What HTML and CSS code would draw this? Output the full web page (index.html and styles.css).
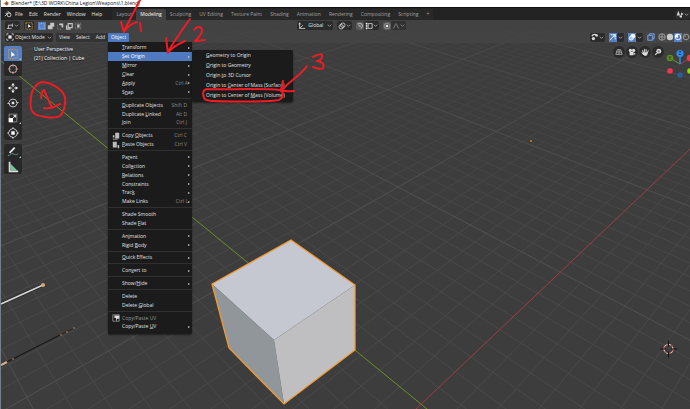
FILE: index.html
```html
<!DOCTYPE html>
<html lang="en">
<head>
<meta charset="utf-8">
<title>Blender</title>
<link rel="stylesheet" href="styles.css">
</head>
<body>
<div class="app">
  <svg class="scene" aria-hidden="true">
    <defs>
      <linearGradient id="minor" gradientUnits="userSpaceOnUse" x1="0" y1="30" x2="0" y2="260">
        <stop offset="0" stop-color="#484848" stop-opacity=".25"/>
        <stop offset="1" stop-color="#484848"/>
      </linearGradient>
      <linearGradient id="major" gradientUnits="userSpaceOnUse" x1="0" y1="30" x2="0" y2="200">
        <stop offset="0" stop-color="#505050" stop-opacity=".5"/>
        <stop offset="1" stop-color="#505050"/>
      </linearGradient>
    </defs>
    <path id="grid-minor" stroke="url(#minor)"/>
    <path id="grid-major" stroke="url(#major)"/>
    <path d="M1 61L427 409" stroke="#6b8f23"/>
    <path d="M690 149L416 409" stroke="#a03c4a"/>
    <path d="M1 304L43 285" stroke="#1c1c1c" stroke-width="3"/>
    <path d="M1 304L43 285" stroke="#d8d8d8" stroke-width="1.600"/>
    <circle cx="43" cy="285" r="2" fill="#d9a878"/>
    <path d="M1 365L62 334" stroke="#1c1a1a" stroke-width="1.400"/>
    <path d="M62 334L74 328" stroke="#2a2422"/>
    <path d="M1 365L7 362" stroke="#d9b08c" stroke-width="2"/>
    <path d="M12 359h2M60 335h2M66 332h2M73 328h2" stroke="#b98a64"/>
    <path d="M212 284L291 240L355 285L274 340Z" fill="#c5c8d0"/>
    <path d="M212 284L274 340L284 404L229 348Z" fill="#90969a"/>
    <path d="M274 340L355 285V350L284 404Z" fill="#bfbfc1"/>
    <path d="M212 284L291 240L355 285V350L284 404L229 348Z" stroke="#f29a34" stroke-width="1.3" fill="none"/>
    <circle cx="531" cy="141" r="1.3" fill="#f0a030" stroke="#222" stroke-width=".6"/>
    <g fill="none">
      <circle cx="668.500" cy="349" r="4.500" stroke="#ddd" stroke-width="1.2"/>
      <circle cx="668.500" cy="349" r="4.500" stroke="#c23b3b" stroke-width="1.2" stroke-dasharray="2.300 2.300"/>
      <path d="M660 349h6M671 349h6M668.500 340.500v6M668.500 351.500v6" stroke="#111"/>
    </g>
  </svg>

  <header class="title">
    <svg class="mark" viewBox="0 0 10 10"><path d="M1 7L6 2L9 5" stroke="#e87d0d" stroke-width="1.500" fill="none"/><circle cx="6" cy="6" r="2.500" stroke="#e87d0d" stroke-width="1.500" fill="#265787"/></svg>
    <span>Blender* [E:\3D WORK\China Legion\Weapons\1.blend]</span>
  </header>

  <div class="topbar">
    <svg class="mark" viewBox="0 0 10 10" stroke="#ddd" fill="none"><path d="M1 7.500L5.500 4H2M4.500 1.500L8.500 5"/><circle cx="6.300" cy="6" r="2.500"/></svg>
    <nav class="menus">
      <button>File</button><button>Edit</button><button>Render</button><button>Window</button><button>Help</button>
    </nav>
    <nav class="tabs">
      <button>Layout</button><button class="active">Modeling</button><button>Sculpting</button><button>UV Editing</button><button>Texture Paint</button><button>Shading</button><button>Animation</button><button>Rendering</button><button>Compositing</button><button>Scripting</button><button>+</button>
    </nav>
    <button class="chip end" aria-label="Scene"><svg viewBox="0 0 10 10" fill="#ddd"><path d="M3 1l2 6H1zM7 3l2 2-2 2-1-2z"/><circle cx="6" cy="8" r="1.500"/></svg><svg class="chev" viewBox="0 0 6 6"><path d="M1 2l2 2 2-2"/></svg></button>
  </div>

  <div class="toolrow">
    <div class="left">
      <button class="chip" aria-label="Tool settings"><svg viewBox="0 0 10 10" stroke="#ddd" fill="none"><path d="M1 8h6M3 8V4h5M8 2v4"/></svg><svg class="chev" viewBox="0 0 6 6"><path d="M1 2l2 2 2-2"/></svg></button>
      <button class="chip pick" aria-label="Select box"><svg viewBox="0 0 10 10"><rect x="1" y="1" width="8" height="8" fill="none" stroke="#e29a33" stroke-dasharray="2 1"/><path d="M4 2.500v5l1.300-1.200L7.500 6z" fill="#fff"/></svg></button>
      <div class="modes">
        <button class="on" aria-label="Set"><svg viewBox="0 0 10 10"><rect x="2" y="2" width="6" height="6" fill="#5680c2" stroke="#9fc0f0" stroke-dasharray="1 1"/></svg></button>
        <button aria-label="Extend"><svg viewBox="0 0 10 10" fill="#ddd"><path d="M4 1h5v5H7v3H1V4h3z"/></svg></button>
        <button aria-label="Subtract"><svg viewBox="0 0 10 10"><path d="M4 2h5v5H7V4H4z" fill="#ddd"/><path d="M2 4v5h4" stroke="#aaa" stroke-dasharray="1 1" fill="none"/></svg></button>
        <button aria-label="Invert"><svg viewBox="0 0 10 10" stroke="#ddd" stroke-width="1.500" fill="none"><path d="M4 2h5v5H4zM2 4v5h5"/></svg></button>
        <button aria-label="Intersect"><svg viewBox="0 0 10 10"><rect x="1.500" y="1.500" width="7" height="7" fill="none" stroke="#aaa" stroke-dasharray="1 1"/><path d="M4 3h3v4H4z" fill="#ddd"/></svg></button>
      </div>
    </div>
    <div class="center">
      <label class="field"><svg viewBox="0 0 10 10" stroke="#ddd" fill="none"><path d="M2 1v7h7M2 8l4-4M1 3l1-2 1 2"/></svg><select aria-label="Orientation"><option>Global</option></select><svg class="chev" viewBox="0 0 6 6"><path d="M1 2l2 2 2-2"/></svg></label>
      <button class="chip" aria-label="Pivot"><svg viewBox="0 0 10 10" stroke="#ddd" fill="none"><circle cx="6" cy="4" r="2.800"/><circle cx="4" cy="6" r="2.800"/></svg><svg class="chev" viewBox="0 0 6 6"><path d="M1 2l2 2 2-2"/></svg></button>
      <div class="pair"><button class="lit" aria-label="Snap"><svg viewBox="0 0 10 10" stroke="#aaa" stroke-width="1.500" fill="none"><path d="M2 3c3-3 7 0 6 3L6 8M3 5c1-1 3 0 2 1"/></svg></button><button class="chip" aria-label="Snap to"><svg viewBox="0 0 10 10"><path d="M4 2h5v6H4z" stroke="#ddd" fill="none"/><path d="M1 1h2v2H1zM1 4h2v2H1zM1 7h2v2H1z" fill="#fff"/></svg><svg class="chev" viewBox="0 0 6 6"><path d="M1 2l2 2 2-2"/></svg></button></div>
      <div class="pair"><button class="lit" aria-label="Proportional"><svg viewBox="0 0 10 10"><circle cx="5" cy="5" r="3.500" stroke="#999" fill="none"/><circle cx="5" cy="5" r="1.500" fill="#eee"/></svg></button><button class="chip dim" aria-label="Falloff"><svg viewBox="0 0 10 10" stroke="#aaa" fill="none"><path d="M1 8c3 0 2-6 4-6s1 6 4 6"/></svg><svg class="chev" viewBox="0 0 6 6"><path d="M1 2l2 2 2-2"/></svg></button></div>
    </div>
  </div>

  <div class="viewrow">
    <label class="field mode"><svg viewBox="0 0 10 10"><path d="M3 3h4v4H3z" fill="#eee"/><path d="M1 3V1h2M7 1h2v2M9 7v2H7M3 9H1V7" stroke="#ddd" fill="none"/></svg><select aria-label="Mode"><option>Object Mode</option></select><svg class="chev" viewBox="0 0 6 6"><path d="M1 2l2 2 2-2"/></svg></label>
    <nav class="vmenus">
      <button>View</button><button>Select</button><button>Add</button>
      <div class="holder">
        <button class="open">Object</button>
        <div class="menu" role="menu">
          <button><span><u>T</u>ransform</span><i></i></button>
          <button class="hot"><span><u>S</u>et Origin</span><i></i></button>
          <button><span><u>M</u>irror</span><i></i></button>
          <button><span><u>C</u>lear</span><i></i></button>
          <button><span><u>A</u>pply</span><kbd>Ctrl A</kbd><i></i></button>
          <button><span>S<u>n</u>ap</span><i></i></button>
          <hr>
          <button><span><u>D</u>uplicate Objects</span><kbd>Shift D</kbd></button>
          <button><span>Duplicate <u>L</u>inked</span><kbd>Alt D</kbd></button>
          <button><span><u>J</u>oin</span><kbd>Ctrl J</kbd></button>
          <hr>
          <button class="has-icon"><svg viewBox="0 0 10 10" fill="#bbb"><path d="M4 1h5v7H4zM1 4h2v3H1z"/><path d="M1 9h6" stroke="#bbb"/></svg><span>Copy <u>O</u>bjects</span><kbd>Ctrl C</kbd></button>
          <button class="has-icon"><svg viewBox="0 0 10 10" fill="#bbb"><path d="M1 1h5v7H1zM7 5h2v4H7z"/></svg><span><u>P</u>aste Objects</span><kbd>Ctrl V</kbd></button>
          <hr>
          <button><span>Pa<u>r</u>ent</span><i></i></button>
          <button><span>Coll<u>e</u>ction</span><i></i></button>
          <button><span><u>R</u>elations</span><i></i></button>
          <button><span>Co<u>n</u>straints</span><i></i></button>
          <button><span>Trac<u>k</u></span><i></i></button>
          <button><span>Make Links</span><kbd>Ctrl L</kbd><i></i></button>
          <hr>
          <button><span>Shade Smooth</span></button>
          <button><span>Shade <u>F</u>lat</span></button>
          <hr>
          <button><span>An<u>i</u>mation</span><i></i></button>
          <button><span>Rigid <u>B</u>ody</span><i></i></button>
          <hr>
          <button><span><u>Q</u>uick Effects</span><i></i></button>
          <hr>
          <button><span>Con<u>v</u>ert to</span><i></i></button>
          <hr>
          <button><span>Show/<u>H</u>ide</span><i></i></button>
          <hr>
          <button><span>Delete</span></button>
          <button><span>Delete <u>G</u>lobal</span></button>
          <hr>
          <button class="has-icon muted"><svg viewBox="0 0 10 10"><path d="M1 1h8v8H1z" fill="none" stroke="#999"/><path d="M3 2h6v4H6v2H5V5H3z" fill="#ddd"/></svg><span>Copy/Paste UV</span></button>
          <button><span>Copy/Paste <u>U</u>V</span><i></i></button>
        </div>
        <div class="menu sub" role="menu">
          <button><span><u>G</u>eometry to Origin</span></button>
          <button><span><u>O</u>rigin to Geometry</span></button>
          <button><span>Origin <u>t</u>o 3D Cursor</span></button>
          <button><span>Origin to <u>C</u>enter of Mass (Surface)</span></button>
          <button><span>Origin to Center of <u>M</u>ass (Volume)</span></button>
        </div>
      </div>
    </nav>
    <div class="right">
      <button class="chip" aria-label="Visibility"><svg viewBox="0 0 10 10"><path d="M1 4c2-3 5-3 7 0" stroke="#ddd" stroke-width="1.500" fill="none"/><circle cx="3" cy="7" r="2" fill="#ddd"/><circle cx="7" cy="3" r="1.500" fill="#ddd"/></svg><svg class="chev" viewBox="0 0 6 6"><path d="M1 2l2 2 2-2"/></svg></button>
      <div class="pair"><button class="blue" aria-label="Gizmos"><svg viewBox="0 0 10 10" stroke="#fff" fill="none"><path d="M1 9L8 2M5 2h3v3M2 2c3 0 6 3 6 6"/></svg></button><button class="chip" aria-label="Gizmo options"><svg class="chev" viewBox="0 0 6 6"><path d="M1 2l2 2 2-2"/></svg></button></div>
      <div class="pair"><button class="blue" aria-label="Overlays"><svg viewBox="0 0 10 10"><circle cx="6" cy="4" r="3" fill="#fff"/><circle cx="4" cy="6.500" r="2.500" fill="#a9c4ee" stroke="#fff"/></svg></button><button class="chip" aria-label="Overlay options"><svg class="chev" viewBox="0 0 6 6"><path d="M1 2l2 2 2-2"/></svg></button></div>
      <button class="xray" aria-label="X-ray"><svg viewBox="0 0 10 10" stroke="#8fb0e4" fill="none"><path d="M1 3h6v6H1zM3 3V1h6v6H7"/></svg></button>
      <div class="shade">
        <button aria-label="Wireframe"><svg viewBox="0 0 10 10" stroke="#aaa" fill="none"><circle cx="5" cy="5" r="4"/><path d="M1 5h8M5 1v8"/></svg></button>
        <button aria-label="Solid"><svg viewBox="0 0 10 10"><circle cx="5" cy="5" r="4" fill="#ccc"/></svg></button>
        <button class="blue" aria-label="Material"><svg viewBox="0 0 10 10"><circle cx="5" cy="5" r="3.500" stroke="#fff" fill="none"/><path d="M5 1a4 4 0 0 0-4 4l4 1z" fill="#fff"/></svg></button>
        <button aria-label="Rendered"><svg viewBox="0 0 10 10"><circle cx="5" cy="5" r="3.500" stroke="#aaa" fill="none"/><path d="M5 2a3 3 0 0 0-3 3h3z" fill="#777"/></svg></button>
      </div>
    </div>
  </div>

  <main class="view">
    <div class="tools">
      <div class="group">
        <button class="blue corner" aria-label="Select box"><svg viewBox="0 0 14 14"><rect x="2" y="2" width="10" height="10" fill="none" stroke="#e29a33" stroke-dasharray="2 1"/><path d="M5 4v6.500l1.700-1.500L9.500 8.500z" fill="#fff"/></svg></button>
        <button aria-label="Cursor"><svg viewBox="0 0 14 14" fill="none"><circle cx="7" cy="7" r="4.500" stroke="#eee"/><circle cx="7" cy="7" r="4.500" stroke="#c44" stroke-dasharray="2 2"/><path d="M7 1v4M7 9v4M1 7h4M9 7h4" stroke="#999" stroke-width=".8"/></svg></button>
      </div>
      <div class="group">
        <button aria-label="Move"><svg viewBox="0 0 14 14" fill="#eee"><path d="M7 1l2 3H5zM7 13l2-3H5zM1 7l3-2v4zM13 7l-3-2v4z"/><path d="M7 3v3M7 8v3M3 7h3M8 7h3" stroke="#ddd"/></svg></button>
        <button aria-label="Rotate"><svg viewBox="0 0 14 14" fill="none" stroke="#ddd"><path d="M2.500 6a4.600 4.600 0 0 1 9 0M11.500 8a4.600 4.600 0 0 1-9 0"/><path d="M7 5l2 2-2 2-2-2zM10 6h4l-2 2zM0 8h4L2 6z" fill="#eee" stroke="none"/></svg></button>
        <button class="corner" aria-label="Scale"><svg viewBox="0 0 14 14"><path d="M2.500 2.500h9v9h-9z" fill="none" stroke="#999"/><path d="M2 7h5v5H2z" fill="#fff"/><path d="M7 7l3-3M7.500 4H10v2.500" stroke="#fff" fill="none"/></svg></button>
        <button aria-label="Transform"><svg viewBox="0 0 14 14"><circle cx="7" cy="7" r="5" fill="none" stroke="#ddd" stroke-dasharray="6 2"/><path d="M5 5h4v4H5z" fill="#fff"/><path d="M7 0l1.500 2h-3zM7 14l1.500-2h-3zM0 7l2-1.500v3zM14 7l-2-1.500v3z" fill="#ddd"/></svg></button>
      </div>
      <div class="group">
        <button class="corner" aria-label="Annotate"><svg viewBox="0 0 14 14" fill="none"><path d="M3 8l6-6" stroke="#eee" stroke-width="2"/><path d="M1 11c3 1 3-3 6-2s3 2 6 0" stroke="#6fa58b"/></svg></button>
        <button aria-label="Measure"><svg viewBox="0 0 14 14"><path d="M4 3l8 8H4z" fill="#6fc79a"/><path d="M2 1h2v10h9v2H2z" fill="#ddd"/></svg></button>
      </div>
    </div>
    <p class="info">User Perspective<br>(21) Collection | Cube</p>
    <div class="nav">
      <button aria-label="Perspective"><svg viewBox="0 0 10 10" stroke="#bbb" fill="none"><path d="M3 2h4l2 6H1zM2 5h6M5 2v6"/></svg></button>
      <button aria-label="Camera"><svg viewBox="0 0 10 10" fill="#ddd"><circle cx="3" cy="3" r="2"/><circle cx="7" cy="3" r="2"/><path d="M2 5h5v4H2zM7 7l2-1v3z"/></svg></button>
      <button aria-label="Pan"><svg viewBox="0 0 10 10" stroke="#ddd" stroke-width="1.200" fill="#ddd"><path d="M3 6L2 3M4.500 5V1.500M6.500 5V2M8 6l1-2.500M3 6h5L7 9H4L1 6" stroke-linecap="round"/></svg></button>
      <button aria-label="Zoom"><svg viewBox="0 0 10 10"><circle cx="6" cy="4" r="3" fill="#ddd"/><path d="M4 6L1.500 8.500" stroke="#ddd" stroke-width="1.500"/><path d="M4.500 4h3M6 2.500v3" stroke="#444" stroke-width=".7"/></svg></button>
    </div>
    <svg class="gizmo" viewBox="0 0 24 32">
      <path d="M14 16L4 10" stroke="#6b9a1c"/><path d="M14 16L24 10" stroke="#b33a4a"/><path d="M14 16V5" stroke="#2f88f0" stroke-width="1.500"/>
      <circle cx="4" cy="10" r="3.300" fill="#5f8a1d"/><circle cx="24" cy="10" r="3.300" fill="#e8384f"/><circle cx="14" cy="5.500" r="3.600" fill="#2f8bf2"/>
      <circle cx="4" cy="23" r="2.800" fill="#f5364f"/><circle cx="14" cy="27" r="2.800" fill="#2c5d9c"/><circle cx="24" cy="23" r="2.800" fill="#8bdc00"/>
      <text x="14" y="7" class="axis">Z</text><text x="4" y="12" class="axis">Y</text>
    </svg>
  </main>

  <svg class="notes" aria-hidden="true">
    <path d="M140 0L124 31M121 22L124 32C128 26 131 24 137 22M140 23L141 31"/>
    <path d="M190 19C182 30 174 41 168 52M166 38L168 53C172 47 178 44 185 41M194 30C197 26 201 26 202 30C202 35 198 38 195 41L205 40"/>
    <path d="M42 82C49 82 62 88 65 97C66 104 64 112 60 116C55 119 40 117 35 114C29 111 30 99 32 92C34 87 37 83 42 82M41 98L42 92L44 90L52 108M44 108C50 109 54 107 60 104"/>
    <path d="M207 89C201 90 203 98 206 100C212 102 270 102 279 100C284 97 284 92 280 90C260 88 220 90 207 89M307 66C301 75 291 80 282 90M283 81L281 90C285 92 289 91 294 91M313 57C318 54 323 53 322 57C321 60 319 61 317 61C321 61 325 64 323 68C320 70 316 68 313 67"/>
  </svg>
</div>
<script src="grid.js"></script>
</body>
</html>
```
FILE: styles.css
```css
* { box-sizing: border-box; }
body {
  margin: 0;
  background: #3d3d3d;
  color: #e2e2e2;
  font: 5px/9px "Open Sans", "Noto Sans", sans-serif;
}
button, select {
  appearance: none;
  margin: 0;
  padding: 0;
  border: 0;
  background: none;
  color: inherit;
  font: inherit;
  white-space: nowrap;
}
svg { display: block; flex: none; width: 8px; height: 8px; }
.app {
  position: relative;
  display: flex;
  flex-direction: column;
  min-height: 100vh;
  overflow: hidden;
  border-left: 1px solid #75808a;
}
.scene, .notes {
  position: absolute;
  top: 0;
  left: -1px;
  width: calc(100% + 1px);
  height: 100%;
}
#grid-minor, #grid-major { fill: none; }
.notes {
  z-index: 5;
  pointer-events: none;
  fill: none;
  stroke: #ee1c25;
  stroke-width: 2;
  stroke-linecap: round;
  stroke-linejoin: round;
}
.title, .topbar, .toolrow, .viewrow, .view { position: relative; }
.title {
  display: flex;
  gap: 1px;
  height: 8px;
  padding-left: 1px;
  overflow: hidden;
  background: #fff;
  color: #111;
  line-height: 6px;
  border-bottom: 1px solid #111;
}
.title .mark { height: 6px; }
.topbar {
  display: flex;
  align-items: center;
  height: 12px;
  padding-left: 3px;
  background: #232323;
}
.topbar .mark { margin-right: 3px; }
.menus { display: flex; gap: 6px; }
.tabs { display: flex; align-self: stretch; margin: 1px 0 0 10px; color: #a0a0a0; }
.tabs button { padding: 0 4px; background: #282828; }
.tabs .active { background: #424242; color: #fff; border-radius: 2px 2px 0 0; }
.chip, .field {
  display: flex;
  align-items: center;
  height: 9px;
  padding: 0 1px;
  border-radius: 2px;
  background: #2b2b2b;
}
.chev { width: 5px; height: 5px; fill: none; stroke: #aaa; }
.end { margin-left: auto; }
.toolrow, .viewrow {
  display: flex;
  align-items: center;
  height: 11px;
  background: rgba(70, 70, 70, .75);
}
.toolrow { background: #424242; }
.left, .center, .right, .modes, .pair, .shade { display: flex; align-items: center; }
.left { flex: 0 0 43%; padding-left: 4px; gap: 4px; }
.center { gap: 4px; }
.modes { gap: 1px; }
.modes button { opacity: .85; }
.modes .on { opacity: 1; background: #5680c2; }
.field select { width: 18px; }
.center .field { gap: 2px; width: 36px; }
.lit { background: #5a5a5a; border-radius: 2px; }
.dim { opacity: .7; }
.blue { background: #5680c2; }
.viewrow { z-index: 2; height: 12px; padding-left: 4px; }
.mode { gap: 1px; width: 48px; }
.mode select { width: 31px; }
.vmenus { display: flex; margin-left: 3px; }
.vmenus > button, .open { padding: 0 3px; background: #333; border-radius: 1px; }
.holder { position: relative; }
.vmenus .open { background: #4f7ac0; color: #fff; }
.menu {
  position: absolute;
  top: 9px;
  left: 0;
  display: flex;
  flex-direction: column;
  width: 84px;
  max-height: 292px;
  padding: 2px 0;
  background: #1b1b1b;
  border-radius: 0 0 2px 2px;
  box-shadow: 0 1px 2px rgba(0, 0, 0, .5);
}
.menu button {
  position: relative;
  display: flex;
  align-items: center;
  flex: 0 1 9px;
  min-height: 0;
  padding: 0 2px 0 14px;
  text-align: left;
}
.menu button.has-icon { padding-left: 4px; }
.has-icon svg { margin-right: 2px; }
.menu hr { flex: 0 1 4px; min-height: 0; width: 100%; margin: 0; border: 0; background: linear-gradient(#1b1b1b 1px, #303030 1px 2px, #1b1b1b 2px); }
.menu span { flex: 1; }
.menu kbd { font: inherit; color: #8c8c8c; margin-right: 3px; }
.menu kbd + i { margin-left: -3px; }
.menu i { border: solid transparent; border-width: 1px 0 1px 2px; border-left-color: #ccc; }
.menu u { text-decoration-thickness: 1px; text-decoration-color: #888; text-underline-offset: 0; }
.menu .hot { background: #4f7ac0; color: #fff; }
.menu .muted { color: #999; }
.menu.sub { top: 17px; left: 84px; width: 101px; padding: 1px 0; border-radius: 2px; }
.sub button { flex-basis: 10px; }
.right { gap: 4px; margin-left: auto; }
.shade { margin-left: -1px; }
.shade button { background: #4a4a4a; height: 9px; }
.shade .blue, .right .blue { background: #5680c2; height: 9px; }
.xray { background: #3f4f6a; }
.view { display: flex; flex: 1; align-items: flex-start; padding: 3px 0 0 3px; }
.tools { display: flex; flex-direction: column; gap: 4px; width: 18px; }
.group { display: flex; flex-direction: column; border-radius: 2px; overflow: hidden; background: #282828; }
.group button { position: relative; display: grid; place-items: center; height: 15px; }
.group svg { width: 12px; height: 12px; }
.corner::after {
  content: "";
  position: absolute;
  right: 1px;
  bottom: 1px;
  border: 1px solid transparent;
  border-right-color: #bbb;
  border-bottom-color: #bbb;
}
.info { margin: -1px 0 0 12px; color: #fff; text-shadow: 0 1px 1px #111; }
.nav { display: flex; gap: 1px; margin: 0 2px 0 auto; }
.nav button { display: grid; place-items: center; width: 12px; height: 12px; border-radius: 50%; background: #2a2a2a; }
.gizmo { width: 24px; height: 32px; margin-top: 2px; }
.axis { font-size: 5px; text-anchor: middle; fill: #112; }
```
FILE: grid.js
```js
// Projects the ground plane (units of ten cells) onto the viewport.
function project(u, v) {
  const w = 1 + 0.3013 * u + 0.3134 * v;
  const x = (421 + 307.7 * u - 86.1 * v) / w;
  const y = (404 - 50 * u - 52 * v) / w;
  return x.toFixed(1) + ' ' + y.toFixed(1);
}

let minor = '';
let major = '';
for (let i = -25; i <= 160; i++) {
  const c = i / 10;
  const fromV = Math.max(-3, (-0.7 - 0.3013 * c) / 0.3134);
  const fromU = Math.max(-3, (-0.7 - 0.3134 * c) / 0.3013);
  const lines = 'M' + project(c, fromV) + 'L' + project(c, 16) +
    'M' + project(fromU, c) + 'L' + project(16, c);
  if (i % 10 === 0) {
    if (i !== 0) major += lines;
  } else if (i < 70) {
    minor += lines;
  }
}
document.getElementById('grid-minor').setAttribute('d', minor);
document.getElementById('grid-major').setAttribute('d', major);
```
